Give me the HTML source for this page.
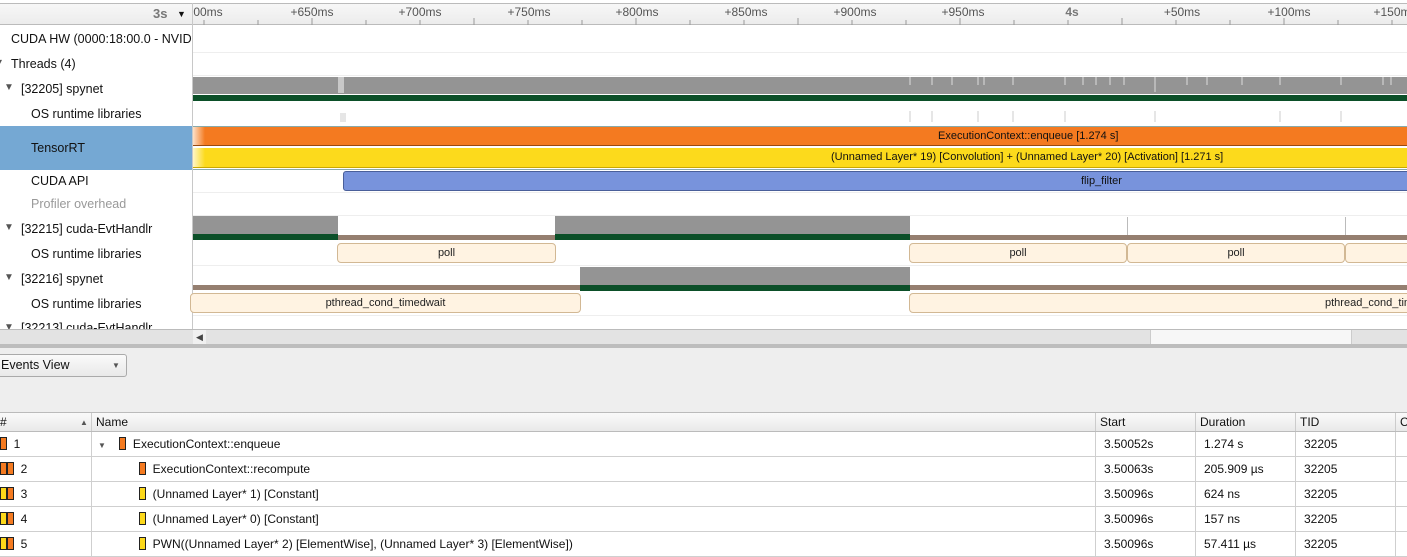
<!DOCTYPE html>
<html><head><meta charset="utf-8"><style>
*{margin:0;padding:0;box-sizing:border-box}
body{width:1407px;height:550px;overflow:hidden;background:#eeeeee;font-family:"Liberation Sans",sans-serif;font-size:12px;color:#111;position:relative}
.a{position:absolute}
.lbl{position:absolute;white-space:nowrap;font-size:12px}
.tk{position:absolute;top:14px;font-size:12px;color:#555;transform:translateX(-50%);white-space:nowrap}
.box{position:absolute;background:#fff3e2;border:1px solid #d2b894;border-radius:4px;font-size:11px;text-align:center;line-height:18px;color:#222}
.th{position:absolute;top:413px;height:19px;line-height:19px;padding-left:4px;border-right:1px solid #ccc;background:linear-gradient(#fafafa,#e8e8e8);font-size:12px}
.row{position:absolute;left:0;width:1407px;height:25px;background:#fff;border-bottom:1px solid #cfcfcf}
.c{position:absolute;top:0;height:25px;line-height:25px;border-right:1px solid #cfcfcf;font-size:12px;white-space:nowrap;overflow:hidden}
.sq{display:inline-block;width:7px;height:13px;border:1px solid #222;vertical-align:-2px}
.o{background:#f47a20}.y{background:#fcd81a}
.tri{position:absolute;font-size:10px;color:#555}
</style></head><body>
<div class="a" style="left:0;top:0;width:1407px;height:330px;background:#fff"></div>
<div class="a" style="left:0;top:3px;width:1407px;height:22px;background:linear-gradient(#f7f7f7,#ececec);border-top:1px solid #bbb;border-bottom:1px solid #bbb"></div>
<div class="lbl" style="left:153px;top:6px;font-weight:bold;color:#777;font-size:13px">3s</div>
<div class="lbl" style="left:177px;top:9px;font-size:9px">▼</div>
<div class="a" style="left:192px;top:3px;width:1px;height:327px;background:#c8c8c8"></div>
<div class="tk" style="left:208px;top:5px">00ms</div>
<div class="tk" style="left:312px;top:5px">+650ms</div>
<div class="tk" style="left:420px;top:5px">+700ms</div>
<div class="tk" style="left:529px;top:5px">+750ms</div>
<div class="tk" style="left:637px;top:5px">+800ms</div>
<div class="tk" style="left:746px;top:5px">+850ms</div>
<div class="tk" style="left:855px;top:5px">+900ms</div>
<div class="tk" style="left:963px;top:5px">+950ms</div>
<div class="tk" style="left:1072px;top:5px;font-weight:bold;color:#777">4s</div>
<div class="tk" style="left:1182px;top:5px">+50ms</div>
<div class="tk" style="left:1289px;top:5px">+100ms</div>
<div class="tk" style="left:1395px;top:5px">+150ms</div>
<svg class="a" style="left:193px;top:18px" width="1214" height="7">
<g stroke="#999" stroke-width="1">
<path d="M11 2V7M65 2V7M119 0V7M173 2V7M227 2V7M281 0V7M335 2V7M389 2V7M443 0V7M497 2V7M551 2V7M605 0V7M659 2V7M713 2V7M767 0V7M821 2V7M875 2V7M929 0V7M983 2V7M1037 2V7M1091 0V7M1145 2V7M1199 2V7"/>
</g></svg>
<div class="a" style="left:193px;top:52px;width:1214px;height:1px;background:#eee"></div>
<div class="a" style="left:193px;top:75px;width:1214px;height:1px;background:#eee"></div>
<div class="a" style="left:193px;top:192px;width:1214px;height:1px;background:#eee"></div>
<div class="a" style="left:193px;top:215px;width:1214px;height:1px;background:#eee"></div>
<div class="a" style="left:193px;top:265px;width:1214px;height:1px;background:#eee"></div>
<div class="a" style="left:193px;top:315px;width:1214px;height:1px;background:#eee"></div>
<div class="a" style="left:0;top:25px;width:192px;height:304px;overflow:hidden">
<div class="a" style="left:0;top:101px;width:192px;height:44px;background:#75a8d3"></div>
<div class="lbl" style="left:11px;top:7px;font-size:12.5px">CUDA HW (0000:18:00.0 - NVIDIA</div>
<div class="tri" style="left:-3px;top:32px">▾</div>
<div class="lbl" style="left:11px;top:32px;font-size:12.5px">Threads (4)</div>
<div class="tri" style="left:4px;top:57px">▼</div>
<div class="lbl" style="left:21px;top:57px;font-size:12.5px">[32205] spynet</div>
<div class="lbl" style="left:31px;top:82px;font-size:12.5px">OS runtime libraries</div>
<div class="lbl" style="left:31px;top:116px;font-size:12.5px">TensorRT</div>
<div class="lbl" style="left:31px;top:149px;font-size:12.5px">CUDA API</div>
<div class="lbl" style="left:31px;top:172px;color:#999;font-size:12.5px">Profiler overhead</div>
<div class="tri" style="left:4px;top:197px">▼</div>
<div class="lbl" style="left:21px;top:197px;font-size:12.5px">[32215] cuda-EvtHandlr</div>
<div class="lbl" style="left:31px;top:222px;font-size:12.5px">OS runtime libraries</div>
<div class="tri" style="left:4px;top:247px">▼</div>
<div class="lbl" style="left:21px;top:247px;font-size:12.5px">[32216] spynet</div>
<div class="lbl" style="left:31px;top:272px;font-size:12.5px">OS runtime libraries</div>
<div class="tri" style="left:4px;top:297px">▼</div>
<div class="lbl" style="left:21px;top:296px;font-size:12.5px">[32213] cuda-EvtHandlr</div>
</div>
<div class="a" style="left:193px;top:77px;width:1214px;height:17px;background:#949494"></div>
<div class="a" style="left:193px;top:95px;width:1214px;height:6px;background:#0b4f28"></div>
<div class="a" style="left:338px;top:77px;width:6px;height:16px;background:#c8c8c8"></div>
<svg class="a" style="left:193px;top:77px" width="1214" height="48"><g stroke="#ddd" stroke-width="1"><path d="M717 0V8M739 0V8M759 0V8M785 0V8M791 0V8M820 0V8M872 0V8M890 0V8M903 0V8M917 0V8M931 0V8M962 0V15M994 0V8M1014 0V8M1049 0V8M1087 0V8M1148 0V8M1190 0V8M1198 0V8M1260 0V8M1276 0V8"/></g><g stroke="#ccc"><path d="M148 36V45M150 36V45M152 36V45M717 34V45M739 34V45M785 34V45M820 34V45M872 34V45M962 34V45M1087 34V45M1148 34V45M1260 34V45"/></g></svg>
<div class="a" style="left:193px;top:126px;width:1214px;height:44px;background:#fff;border-top:1px solid #8aa;border-bottom:1px solid #8aa"></div>
<div class="a" style="left:193px;top:127px;width:1214px;height:19px;background:linear-gradient(90deg,#fde0c8,#f47a20 12px);border-bottom:1px solid #9a4a10;line-height:18px;font-size:11px"><span style="position:absolute;left:745px">ExecutionContext::enqueue [1.274 s]</span></div>
<div class="a" style="left:193px;top:148px;width:1214px;height:20px;background:linear-gradient(90deg,#fff6c8,#fcda1c 12px);border-bottom:1px solid #c9a800;line-height:19px;font-size:11px"><span style="position:absolute;left:638px">(Unnamed Layer* 19) [Convolution] + (Unnamed Layer* 20) [Activation] [1.271 s]</span></div>
<div class="a" style="left:343px;top:171px;width:1070px;height:20px;background:#7893dc;border:1px solid #4a5f9a;border-radius:3px;line-height:18px;font-size:11px"><span style="position:absolute;left:737px">flip_filter</span></div>
<div class="a" style="left:193px;top:216px;width:145px;height:18px;background:#949494"></div>
<div class="a" style="left:193px;top:234px;width:145px;height:6px;background:#0b4f28"></div>
<div class="a" style="left:338px;top:235px;width:217px;height:5px;background:#957f70"></div>
<div class="a" style="left:555px;top:216px;width:355px;height:18px;background:#949494"></div>
<div class="a" style="left:555px;top:234px;width:355px;height:6px;background:#0b4f28"></div>
<div class="a" style="left:910px;top:235px;width:497px;height:5px;background:#957f70"></div>
<div class="a" style="left:1127px;top:217px;width:1px;height:18px;background:#bbb"></div>
<div class="a" style="left:1345px;top:217px;width:1px;height:18px;background:#bbb"></div>
<div class="box" style="left:337px;top:243px;width:219px;height:20px">poll</div>
<div class="box" style="left:909px;top:243px;width:218px;height:20px">poll</div>
<div class="box" style="left:1127px;top:243px;width:218px;height:20px">poll</div>
<div class="box" style="left:1345px;top:243px;width:80px;height:20px"></div>
<div class="a" style="left:193px;top:285px;width:387px;height:5px;background:#957f70"></div>
<div class="a" style="left:580px;top:267px;width:330px;height:18px;background:#949494"></div>
<div class="a" style="left:580px;top:285px;width:330px;height:6px;background:#0b4f28"></div>
<div class="a" style="left:910px;top:285px;width:497px;height:5px;background:#957f70"></div>
<div class="box" style="left:190px;top:293px;width:391px;height:20px">pthread_cond_timedwait</div>
<div class="box" style="left:909px;top:293px;width:520px;height:20px;text-align:left;padding-left:415px">pthread_cond_timedwait</div>
<div class="a" style="left:0;top:329px;width:1407px;height:1px;background:#bbb"></div>
<div class="a" style="left:0;top:330px;width:1407px;height:14px;background:#e3e3e3"></div>
<div class="a" style="left:193px;top:330px;width:13px;height:14px;background:#f0f0f0;font-size:9px;line-height:14px;text-align:center;color:#444">◀</div>
<div class="a" style="left:1150px;top:330px;width:202px;height:14px;background:#f7f7f7;border-left:1px solid #ccc;border-right:1px solid #ccc"></div>
<div class="a" style="left:0;top:344px;width:1407px;height:4px;background:#bdbdbd"></div>
<div class="a" style="left:-6px;top:354px;width:133px;height:23px;background:linear-gradient(#fafafa,#e9e9e9);border:1px solid #aaa;border-radius:3px;font-size:12.5px;line-height:21px;padding-left:6px">Events View<span style="position:absolute;left:117px;font-size:8px;color:#555">▼</span></div>
<div class="a" style="left:0;top:412px;width:1407px;height:1px;background:#bbb"></div>
<div class="th" style="left:-4px;width:96px">#<span style="position:absolute;left:84px;font-size:8px;color:#555">▲</span></div>
<div class="th" style="left:92px;width:1004px">Name</div>
<div class="th" style="left:1096px;width:100px">Start</div>
<div class="th" style="left:1196px;width:100px">Duration</div>
<div class="th" style="left:1296px;width:100px">TID</div>
<div class="th" style="left:1396px;width:20px">C</div>
<div class="a" style="left:0;top:431px;width:1407px;height:1px;background:#bbb"></div>

<div class="row" style="top:432px"><div class="c" style="left:0;width:92px"><span class="sq o"></span>&nbsp;&nbsp;1</div><div class="c" style="left:92px;width:1004px;padding-left:6px"><span style="font-size:8px;color:#555">▼</span>&nbsp;&nbsp;&nbsp;&nbsp;<span class="sq o"></span>&nbsp;&nbsp;ExecutionContext::enqueue</div><div class="c" style="left:1096px;width:100px;padding-left:8px">3.50052s</div><div class="c" style="left:1196px;width:100px;padding-left:8px">1.274 s</div><div class="c" style="left:1296px;width:100px;padding-left:8px">32205</div></div>
<div class="row" style="top:457px"><div class="c" style="left:0;width:92px"><span class="sq o"></span><span class="sq o"></span>&nbsp;&nbsp;2</div><div class="c" style="left:92px;width:1004px;padding-left:47px"><span class="sq o"></span>&nbsp;&nbsp;ExecutionContext::recompute</div><div class="c" style="left:1096px;width:100px;padding-left:8px">3.50063s</div><div class="c" style="left:1196px;width:100px;padding-left:8px">205.909 µs</div><div class="c" style="left:1296px;width:100px;padding-left:8px">32205</div></div>
<div class="row" style="top:482px"><div class="c" style="left:0;width:92px"><span class="sq y"></span><span class="sq o"></span>&nbsp;&nbsp;3</div><div class="c" style="left:92px;width:1004px;padding-left:47px"><span class="sq y"></span>&nbsp;&nbsp;(Unnamed Layer* 1) [Constant]</div><div class="c" style="left:1096px;width:100px;padding-left:8px">3.50096s</div><div class="c" style="left:1196px;width:100px;padding-left:8px">624 ns</div><div class="c" style="left:1296px;width:100px;padding-left:8px">32205</div></div>
<div class="row" style="top:507px"><div class="c" style="left:0;width:92px"><span class="sq y"></span><span class="sq o"></span>&nbsp;&nbsp;4</div><div class="c" style="left:92px;width:1004px;padding-left:47px"><span class="sq y"></span>&nbsp;&nbsp;(Unnamed Layer* 0) [Constant]</div><div class="c" style="left:1096px;width:100px;padding-left:8px">3.50096s</div><div class="c" style="left:1196px;width:100px;padding-left:8px">157 ns</div><div class="c" style="left:1296px;width:100px;padding-left:8px">32205</div></div>
<div class="row" style="top:532px"><div class="c" style="left:0;width:92px"><span class="sq y"></span><span class="sq o"></span>&nbsp;&nbsp;5</div><div class="c" style="left:92px;width:1004px;padding-left:47px"><span class="sq y"></span>&nbsp;&nbsp;PWN((Unnamed Layer* 2) [ElementWise], (Unnamed Layer* 3) [ElementWise])</div><div class="c" style="left:1096px;width:100px;padding-left:8px">3.50096s</div><div class="c" style="left:1196px;width:100px;padding-left:8px">57.411 µs</div><div class="c" style="left:1296px;width:100px;padding-left:8px">32205</div></div>
</body></html>
